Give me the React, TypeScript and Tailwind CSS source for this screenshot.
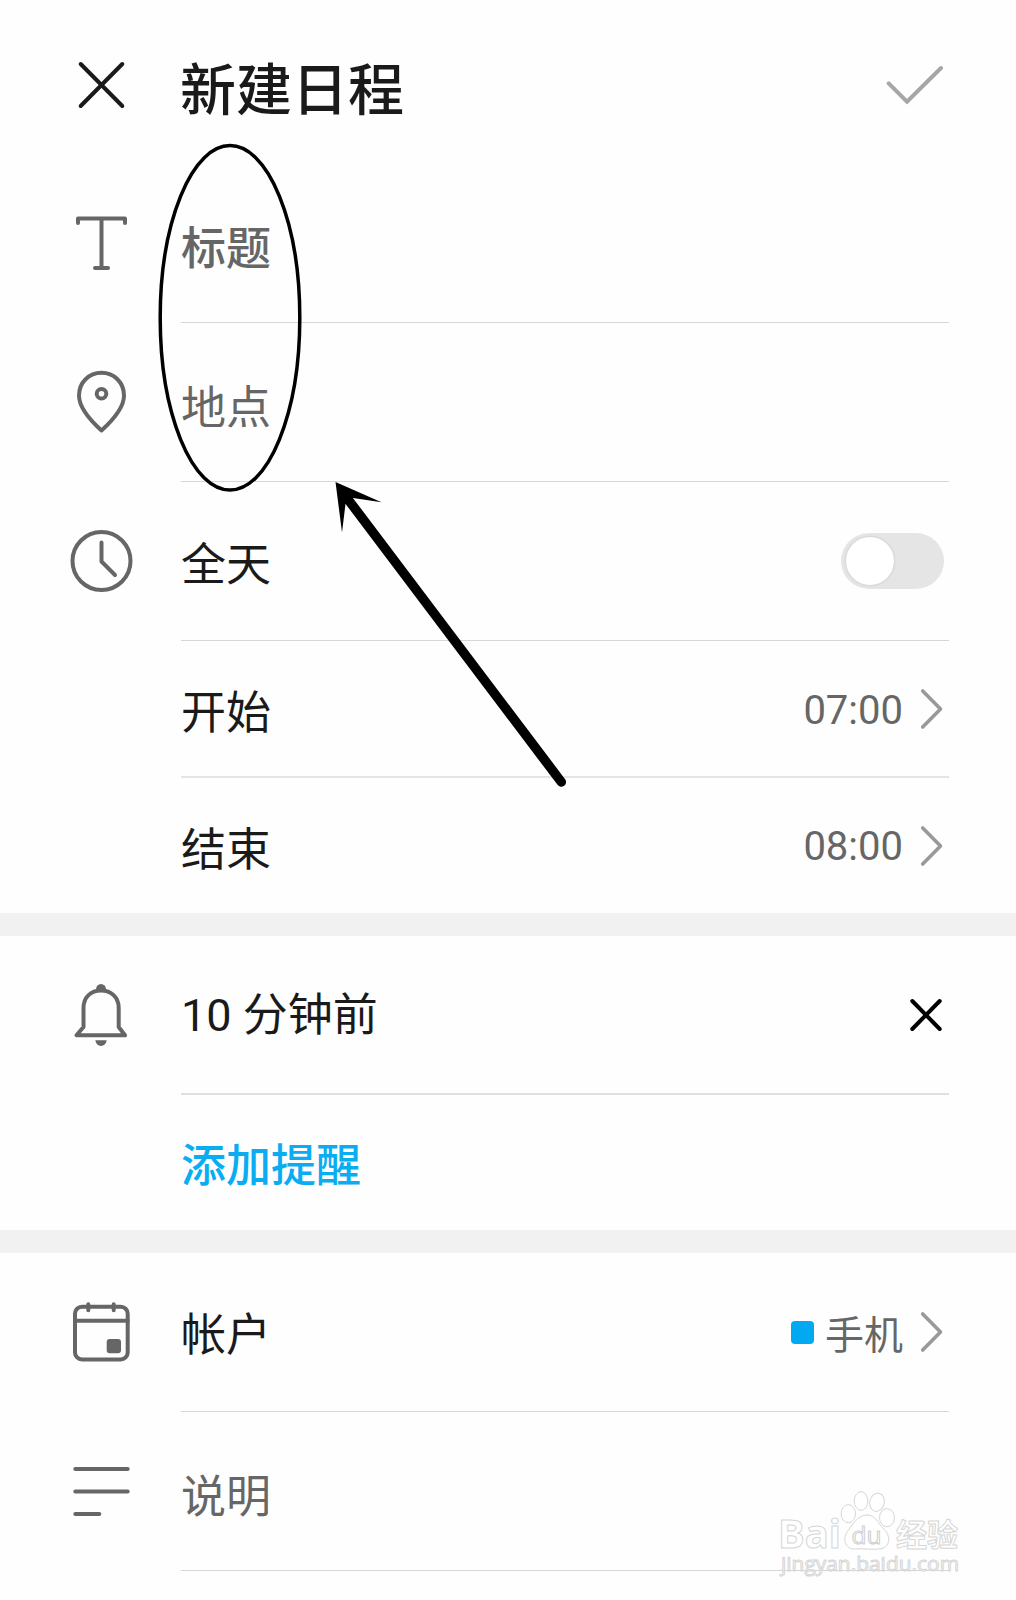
import type { ReactNode } from 'react';

const ICON = 'h-16 w-16 shrink-0';

interface RowProps {
  icon?: ReactNode;
  label: string;
  height: string;
  labelClass?: string;
  border?: string;
  children?: ReactNode;
}

function Row({
  icon,
  label,
  height,
  labelClass = 'pt-[10px] text-[#1a1a1a]',
  border = 'border-b border-[#d6d6d6]',
  children,
}: RowProps) {
  return (
    <div className={`flex pl-[69px] pr-[67px] ${height}`}>
      <div className="flex w-[112px] shrink-0 items-center pb-[2px]">{icon}</div>
      <div className={`flex flex-1 items-center justify-between pr-[5px] ${border}`}>
        <span className={`whitespace-pre text-[45px] leading-[60px] ${labelClass}`}>{label}</span>
        <div className="flex items-center">{children}</div>
      </div>
    </div>
  );
}

function Band() {
  return <div className="h-[23px] bg-[#f1f1f1]" />;
}

function Chevron() {
  return (
    <svg className="ml-[17px] h-[42px] w-[24px]" viewBox="0 0 24 42" fill="none" stroke="#999" strokeWidth="3.600" strokeLinecap="round" strokeLinejoin="round">
      <path d="M2.700 3 20.500 21 2.700 39" />
    </svg>
  );
}

function TitleIcon() {
  return (
    <svg className={ICON} viewBox="0 0 64 64" fill="none" stroke="#666" strokeWidth="4" strokeLinecap="round" strokeLinejoin="round">
      <path d="M9 12V7.500H56V12M32.500 7.500V57M26 57H39" />
    </svg>
  );
}

function PinIcon() {
  return (
    <svg className={ICON} viewBox="0 0 64 64" fill="none" stroke="#666" strokeWidth="4" strokeLinejoin="round">
      <path d="M32.500 60.500C22 51 10 37 10 25.500C10 12.500 20 2.800 32.500 2.800S55 12.500 55 25.500C55 37 43 51 32.500 60.500Z" />
      <circle cx="32.500" cy="23.800" r="4.800" />
    </svg>
  );
}

function ClockIcon() {
  return (
    <svg className={ICON} viewBox="0 0 64 64" fill="none" stroke="#666" strokeWidth="4" strokeLinecap="round" strokeLinejoin="round">
      <circle cx="32.500" cy="32" r="29" />
      <path d="M32.500 13.500V32.500L46 46" />
    </svg>
  );
}

function BellIcon() {
  return (
    <svg className={ICON} viewBox="0 0 64 64" fill="none" stroke="#666" strokeWidth="4" strokeLinejoin="round">
      <path d="M14.500 44V25C14.500 14 22 7.500 32 7.500S49.700 14 49.700 25V44L56 52.300H7.500Z" />
      <path d="M27 6.500A5 5.500 0 0 1 37 6.500Z" fill="#666" stroke="none" />
      <path d="M26.300 57.300H37.700C37 61 35 63 32 63S27 61 26.300 57.300Z" fill="#666" stroke="none" />
    </svg>
  );
}

function CalendarIcon() {
  return (
    <svg className={ICON} viewBox="0 0 64 64" fill="none" stroke="#666" strokeWidth="4" strokeLinecap="round">
      <rect x="6" y="6.700" width="52.700" height="52.700" rx="7" />
      <path d="M6 20.700H58.700M19.300 4.300V10.300M44.700 4.300V10.300" />
      <rect x="37.700" y="39" width="14.300" height="14.300" rx="3" fill="#666" stroke="none" />
    </svg>
  );
}

function NotesIcon() {
  return (
    <svg className={ICON} viewBox="0 0 64 64" stroke="#666" strokeWidth="4" strokeLinecap="round">
      <path d="M6.300 10H58.700M6.300 32.500H58.700M6.300 55H30.300" />
    </svg>
  );
}

// Hand-drawn ellipse and arrow over the form
function Annotation() {
  return (
    <svg className="pointer-events-none absolute left-0 top-0" width="600" height="820" fill="none" stroke="#000">
      <ellipse cx="230" cy="317.800" rx="69.800" ry="172.200" strokeWidth="3.500" />
      <path d="M347 498 561.300 782" strokeWidth="9.500" strokeLinecap="round" />
      <path d="M335.500 482 381.500 502.200 353 498 345.500 504 342 532.500Z" fill="#000" stroke="none" />
    </svg>
  );
}

function Watermark() {
  return (
    <svg className="pointer-events-none absolute left-[760px] top-[1470px]" width="256" height="130" fill="#fff" stroke="#d6d6d6" strokeWidth="1" strokeLinejoin="round">
      <text x="18" y="78" fontSize="39" fontWeight="700" fontFamily="Open Sans, sans-serif" textLength="63" lengthAdjust="spacingAndGlyphs">Bai</text>
      <ellipse cx="88.300" cy="43.700" rx="7.200" ry="9" />
      <ellipse cx="101" cy="31" rx="6.800" ry="9.300" />
      <ellipse cx="117" cy="32.300" rx="7.300" ry="9.200" transform="rotate(12 117 32.300)" />
      <ellipse cx="127" cy="47.700" rx="7.500" ry="9" />
      <path d="M107 45C116 45 118 54 124 59C131 66 131 78 119 79C112 80 102 78 96 79C86 80 82 70 87 62C92 56 97 45 107 45Z" />
      <text x="91.500" y="73.500" fontSize="23" stroke="#cfcfcf" fontFamily="Open Sans, sans-serif" textLength="30" lengthAdjust="spacingAndGlyphs">du</text>
      <text x="136" y="75.500" fontSize="31" fontWeight="700" fontFamily="Noto Sans CJK SC, sans-serif">经验</text>
      <text x="21" y="101" fontSize="20" fillOpacity="0.6" fontFamily="Open Sans, sans-serif" textLength="178" lengthAdjust="spacingAndGlyphs">jingyan.baidu.com</text>
    </svg>
  );
}

export default function App() {
  return (
    <div className="relative h-[1600px] w-[1016px] overflow-hidden bg-[#fefefe] font-['Roboto','Noto_Sans_CJK_SC',sans-serif]">
      {/* Header */}
      <header className="flex h-[164px] items-start pl-[69px] pr-[72px] pt-[53px]">
        <svg className={ICON} viewBox="0 0 64 64" stroke="#1a1a1a" strokeWidth="4" strokeLinecap="round">
          <path d="M11.700 11 53.300 53M53.300 11 11.700 53" />
        </svg>
        <h1 className="ml-[47px] flex-1 pt-[3px] text-[56px] font-medium leading-[70px] text-[#1a1a1a]">新建日程</h1>
        <svg className="h-16 w-[58px]" viewBox="0 0 58 64" fill="none" stroke="#a6a6a6" strokeWidth="4" strokeLinecap="round">
          <path d="M2.700 30.300 21 48.700 55 15" />
        </svg>
      </header>

      <Row icon={<TitleIcon />} label="标题" height="h-[159px]" labelClass="pt-[13px] font-medium text-[#666]" />
      <Row icon={<PinIcon />} label="地点" height="h-[159px]" labelClass="pt-[13px] text-[#666]" />
      <Row icon={<ClockIcon />} label="全天" height="h-[159px]">
        <div className="flex h-[56px] w-[103px] items-center rounded-full bg-[#e5e5e5] pl-[5px]">
          <div className="h-[48px] w-[48px] rounded-full bg-white shadow-[0_0_3px_rgba(0,0,0,0.15)]" />
        </div>
      </Row>
      <Row label="开始" height="h-[137px]" border="border-b-2 border-[#e4e4e4]">
        <span className="pt-[4px] text-[40px] text-[#666]">07:00</span>
        <Chevron />
      </Row>
      <Row label="结束" height="h-[135px]" border="">
        <span className="pt-[3px] text-[40px] text-[#666]">08:00</span>
        <Chevron />
      </Row>

      <Band />

      {/* Reminders */}
      <Row icon={<BellIcon />} label="10 分钟前" height="h-[159px]" labelClass="pt-[2px] text-[#1a1a1a]" border="border-b-2 border-[#e0e0e0]">
        <svg className="h-[36px] w-[36px]" viewBox="0 0 36 36" stroke="#000" strokeWidth="4" strokeLinecap="round">
          <path d="M4.300 4 31.700 32M31.700 4 4.300 32" />
        </svg>
      </Row>
      <Row label="添加提醒" height="h-[135px]" labelClass="pt-[9px] font-medium text-[#0aadf2]" border="" />

      <Band />

      <Row icon={<CalendarIcon />} label="帐户" height="h-[159px]" labelClass="pt-[8px] text-[#1a1a1a]">
        <span className="h-[23px] w-[23px] rounded-[4px] bg-[#03a9f0]" />
        <span className="ml-[11px] pt-[8px] text-[39px] text-[#666]">手机</span>
        <Chevron />
      </Row>
      <Row icon={<NotesIcon />} label="说明" height="h-[159px]" labelClass="pt-[13px] text-[#666]" />

      <Annotation />
      <Watermark />
    </div>
  );
}
